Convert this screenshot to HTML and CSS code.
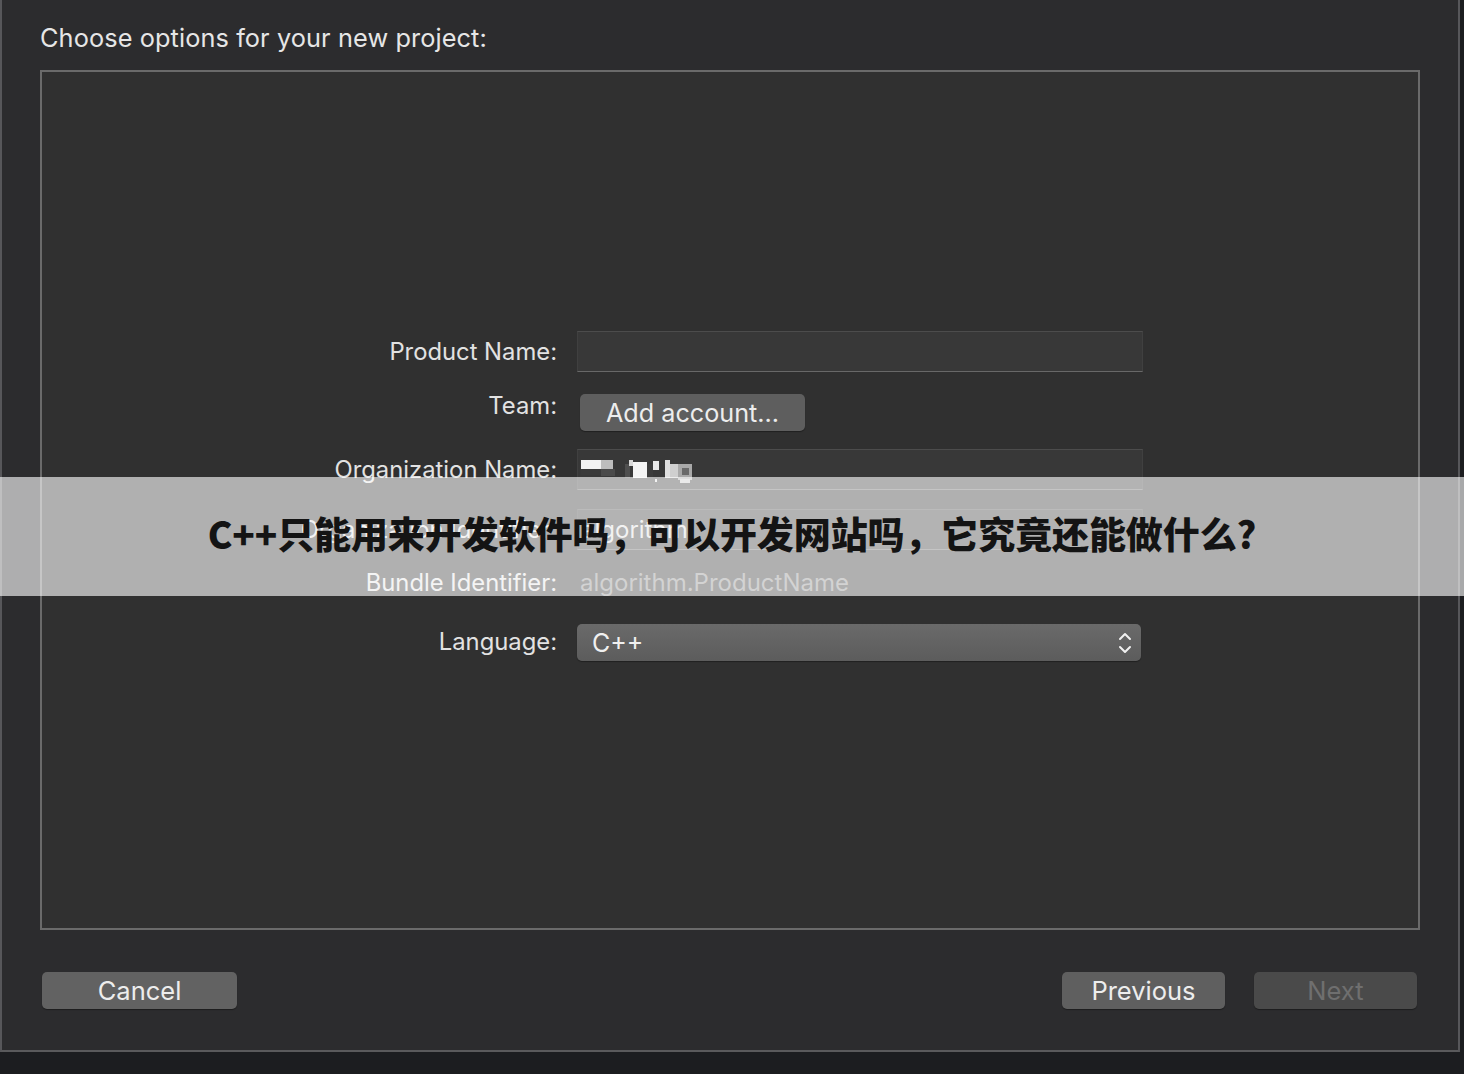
FILE: index.html
```html
<!DOCTYPE html>
<html lang="zh-CN">
<head>
<meta charset="utf-8">
<title>Choose options for your new project</title>
<link rel="stylesheet" href="styles.css">
</head>
<body>
<div class="window">
  <header class="sheet-title">Choose options for your new project:</header>

  <section class="options-box">
    <div class="form">
      <label class="label row-product">Product Name:</label>
      <div class="field-cell row-product"><div class="textfield"></div></div>

      <label class="label label-team row-team">Team:</label>
      <div class="field-cell row-team"><button class="btn btn-account">Add account...</button></div>

      <label class="label row-org">Organization Name:</label>
      <div class="field-cell row-org">
        <div class="textfield">
          <svg class="mosaic" width="132" height="28" viewBox="0 0 132 28" aria-hidden="true">
            <rect x="0" y="4" width="20" height="9" fill="#f2f2f2"/>
            <rect x="20" y="4" width="12" height="9" fill="#bdbdbd"/>
            <rect x="0" y="13" width="34" height="6" fill="#3a3a3a"/>
            <rect x="20" y="13" width="14" height="7" fill="#4a4a4a"/>
            <rect x="44" y="8" width="5" height="14" fill="#4f4f4f"/>
            <rect x="48" y="4" width="4" height="6" fill="#d8d8d8"/>
            <rect x="52" y="6" width="14" height="16" fill="#f4f4f4"/>
            <rect x="66" y="8" width="6" height="14" fill="#3c3c3c"/>
            <rect x="72" y="5" width="6" height="9" fill="#e8e8e8"/>
            <rect x="74" y="23" width="2" height="3" fill="#dcdcdc"/>
            <rect x="84" y="4" width="5" height="18" fill="#e0e0e0"/>
            <rect x="89" y="8" width="8" height="14" fill="#cfcfcf"/>
            <rect x="97" y="8" width="14" height="16" fill="#a9a9a9"/>
            <rect x="101" y="12" width="7" height="7" fill="#6a6a6a"/>
            <rect x="99" y="23" width="10" height="4" fill="#c9c9c9"/>
          </svg>
        </div>
      </div>

      <label class="label row-orgid">Organization Identifier:</label>
      <div class="field-cell row-orgid"><div class="textfield"><span class="value">algorithm</span></div></div>

      <label class="label row-bundle">Bundle Identifier:</label>
      <div class="field-cell row-bundle"><span class="bundle-value">algorithm.ProductName</span></div>

      <label class="label label-lang row-lang">Language:</label>
      <div class="field-cell row-lang">
        <div class="popup">
          <span class="popup-value">C++</span>
          <svg class="chevrons" width="14" height="26" viewBox="0 0 14 26" aria-hidden="true">
            <path d="M2 9 L7 4 L12 9" fill="none" stroke="#f0f0f0" stroke-width="2" stroke-linecap="round" stroke-linejoin="round"/>
            <path d="M2 17 L7 22 L12 17" fill="none" stroke="#f0f0f0" stroke-width="2" stroke-linecap="round" stroke-linejoin="round"/>
          </svg>
        </div>
      </div>
    </div>
  </section>

  <footer class="sheet-footer">
    <button class="btn btn-cancel">Cancel</button>
    <div class="footer-right">
      <button class="btn btn-nav">Previous</button>
      <button class="btn btn-nav btn-disabled" disabled>Next</button>
    </div>
  </footer>
</div>

<div class="banner">
  <h1 class="banner-title">C++只能用来开发软件吗，可以开发网站吗，它究竟还能做什么?</h1>
</div>
</body>
</html>
```

FILE: styles.css
```css
html, body {
  margin: 0;
  padding: 0;
}

body {
  background: #1c1d20;
  width: 1464px;
  height: 1074px;
  overflow: hidden;
  font-family: Inter, "Liberation Sans", sans-serif;
  color: #e4e4e4;
  position: relative;
}

/* sheet window */
.window {
  box-sizing: border-box;
  width: 1460px;
  height: 1052px;
  background: #2c2c2e;
  border-left: 2px solid #57575a;
  border-right: 2px solid #57575a;
  border-bottom: 2px solid #5a5a5c;
  padding-left: 38px;
  display: flex;
  flex-direction: column;
}

.sheet-title {
  height: 70px;
  box-sizing: border-box;
  padding-top: 4px;
  display: flex;
  align-items: center;
  font-size: 25.3px;
  color: #e6e6e6;
  letter-spacing: 0.1px;
}

.options-box {
  box-sizing: border-box;
  width: 1380px;
  height: 860px;
  border: 2px solid #6a6a6a;
  background: #303030;
  padding-top: 259px;
}

/* label / control grid */
.form {
  display: grid;
  grid-template-columns: 515px 566px;
  grid-template-rows: 63px 55px 60px 56px 59px 37px;
  column-gap: 20px;
  align-items: start;
}

.row-product { grid-row: 1; }
.row-team { grid-row: 2; }
.row-org { grid-row: 3; }
.row-orgid { grid-row: 4; }
.row-bundle { grid-row: 5; }
.row-lang { grid-row: 6; }

.label {
  grid-column: 1;
  text-align: right;
  font-size: 23.8px;
  line-height: 41px;
  color: #e2e2e2;
  white-space: nowrap;
}

.label-team { line-height: 24px; }
.row-bundle.label { line-height: 36px; }
.label-lang { line-height: 35px; }

.field-cell { grid-column: 2; }

.textfield {
  box-sizing: border-box;
  height: 41px;
  background: #383838;
  border-top: 1px solid #4c4c4c;
  border-bottom: 1px solid #686868;
  border-left: 1px solid #404040;
  border-right: 1px solid #404040;
  display: flex;
  align-items: center;
  padding-left: 3px;
}

.mosaic { display: block; }

.value {
  font-size: 24px;
  color: #dedede;
}

.bundle-value {
  display: block;
  padding-left: 3px;
  font-size: 24px;
  line-height: 36px;
  color: #8b8b8b;
}

/* push buttons */
.btn {
  box-sizing: border-box;
  height: 37px;
  border: none;
  border-radius: 5px;
  font-family: Inter, "Liberation Sans", sans-serif;
  font-size: 25.5px;
  color: #ededed;
  background: #606060;
  padding: 0;
  box-shadow: 0 1px 1px rgba(0, 0, 0, 0.35);
}

.btn-account {
  width: 225px;
  margin-left: 3px;
  background: #5e5e5e;
  font-size: 25.2px;
}

.popup {
  box-sizing: border-box;
  width: 564px;
  height: 37px;
  border-radius: 5px;
  background: linear-gradient(#6a6a6a, #5c5c5c);
  box-shadow: 0 1px 1px rgba(0, 0, 0, 0.35);
  display: flex;
  align-items: center;
  justify-content: space-between;
  padding: 0 9px 0 15px;
}

.popup-value {
  font-size: 25px;
  color: #f0f0f0;
}

.chevrons { display: block; }

/* bottom bar */
.sheet-footer {
  width: 1380px;
  box-sizing: border-box;
  margin-top: 42px;
  padding: 0 3px 0 2px;
  display: flex;
  justify-content: space-between;
}

.btn-cancel {
  width: 195px;
  background: #626262;
}

.footer-right {
  display: flex;
  gap: 29px;
}

.btn-nav {
  width: 163px;
  background: #5f5f5f;
}

.btn-disabled {
  background: #4a4a4a;
  color: #6f6f6f;
}

/* translucent caption strip across the sheet */
.banner {
  position: absolute;
  left: 0;
  top: 477px;
  width: 1464px;
  height: 119px;
  box-sizing: border-box;
  padding-bottom: 7px;
  background: rgba(255, 255, 255, 0.62);
  display: flex;
  align-items: center;
  justify-content: center;
}

.banner-title {
  margin: 0;
  font-family: "Noto Sans CJK SC", "Noto Sans", sans-serif;
  font-weight: 900;
  font-size: 37px;
  color: #141414;
  white-space: nowrap;
  letter-spacing: -0.1px;
}
```
